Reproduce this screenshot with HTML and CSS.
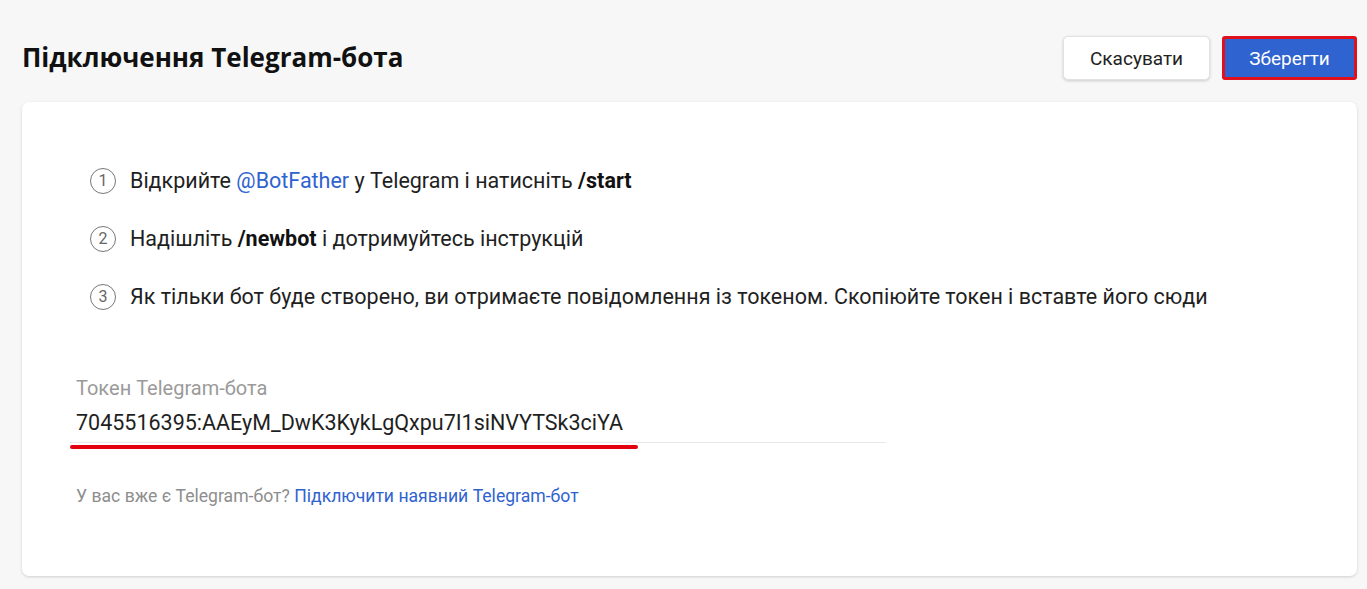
FILE: index.html
```html
<!DOCTYPE html>
<html lang="uk">
<head>
<meta charset="utf-8">
<title>Підключення Telegram-бота</title>
<link rel="stylesheet" href="styles.css">
</head>
<body>
<div class="page">
  <header class="header">
    <h1 class="title">Підключення Telegram-бота</h1>
    <div class="actions">
      <button class="btn btn-cancel">Скасувати</button>
      <button class="btn btn-save">Зберегти</button>
    </div>
  </header>
  <main class="card">
    <ol class="steps">
      <li class="step"><span class="num">1</span><span class="step-text">Відкрийте <a class="link">@BotFather</a> у Telegram і натисніть <b>/start</b></span></li>
      <li class="step"><span class="num">2</span><span class="step-text">Надішліть <b>/newbot</b> і дотримуйтесь інструкцій</span></li>
      <li class="step"><span class="num">3</span><span class="step-text">Як тільки бот буде створено, ви отримаєте повідомлення із токеном. Скопіюйте токен і вставте його сюди</span></li>
    </ol>
    <div class="field">
      <label class="field-label">Токен Telegram-бота</label>
      <div class="field-value">7045516395:AAEyM_DwK3KykLgQxpu7I1siNVYTSk3ciYA</div>
      <span class="mark"></span>
    </div>
    <p class="hint">У вас вже є Telegram-бот? <a class="link">Підключити наявний Telegram-бот</a></p>
  </main>
</div>
</body>
</html>
```
FILE: styles.css
```css
* { box-sizing: border-box; }
html, body { margin: 0; padding: 0; }
body {
  background: #f7f7f7;
  font-family: Roboto, "Liberation Sans", sans-serif;
  color: #1f1f1f;
  width: 1367px;
  height: 589px;
  overflow: hidden;
}
.page {
  padding: 35px 10px 0 22px;
}
.header {
  display: flex;
  align-items: center;
  justify-content: space-between;
  height: 46px;
}
.title {
  margin: 0;
  font-family: "Open Sans", Roboto, sans-serif;
  font-weight: 700;
  font-size: 26px;
  color: #111;
  letter-spacing: 0;
  position: relative;
  top: -1px;
}
.actions {
  display: flex;
  gap: 12px;
  align-items: center;
}
.btn {
  font-family: Roboto, sans-serif;
  font-size: 19px;
  border-radius: 5px;
  cursor: pointer;
}
.btn-cancel {
  width: 147px;
  height: 44px;
  background: #fff;
  color: #222;
  border: 1px solid #e2e2e2;
  box-shadow: 0 1px 3px rgba(0,0,0,0.18);
}
.btn-save {
  width: 135px;
  height: 44px;
  background: #2f63cf;
  color: #fff;
  border: 3px solid #e0101c;
  border-radius: 3px;
}
.card {
  margin-top: 21px;
  width: 1335px;
  height: 474px;
  background: #fff;
  border-radius: 7px;
  box-shadow: 0 1px 3px rgba(0,0,0,0.16);
  padding: 66px 48px 0 68px;
}
.steps {
  list-style: none;
  margin: 0;
  padding: 0;
  display: flex;
  flex-direction: column;
  gap: 32px;
}
.step {
  display: flex;
  align-items: center;
  gap: 14px;
  font-size: 21.5px;
  line-height: 26px;
  color: #1f1f1f;
}
.num {
  width: 26px;
  height: 26px;
  border: 1px solid #777;
  border-radius: 50%;
  display: flex;
  align-items: center;
  justify-content: center;
  font-size: 16px;
  color: #666;
  line-height: 1;
}
.step b { font-weight: 700; color: #111; }
.link { color: #2f63cf; text-decoration: none; }
.field {
  position: relative;
  margin: 67px 0 0 -20px;
  width: 816px;
  border-bottom: 1px solid #e8e8e8;
  padding: 0 0 6px 6px;
}
.field-label {
  display: block;
  font-size: 20px;
  color: #9a9a9a;
  line-height: 22px;
}
.field-value {
  margin-top: 11px;
  font-size: 21.5px;
  line-height: 26px;
  color: #1f1f1f;
}
.mark {
  position: absolute;
  left: 0;
  bottom: -7px;
  width: 568px;
  height: 4px;
  background: #e3000f;
  border-radius: 2px;
}
.hint {
  margin: 43px 0 0 -20px;
  padding-left: 6px;
  font-size: 17.6px;
  color: #8e8e8e;
}
.hint .link { color: #2f63cf; }
```
